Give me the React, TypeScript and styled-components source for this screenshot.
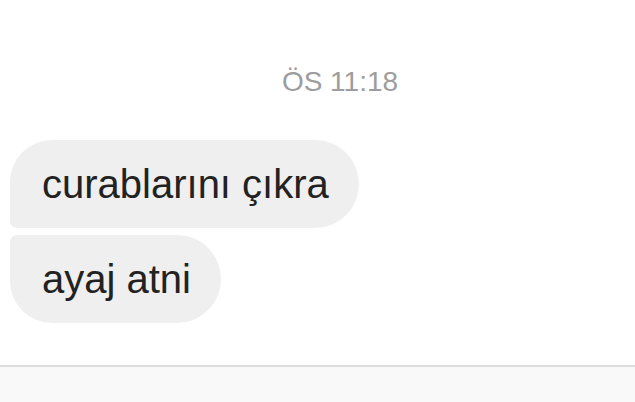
import React from "react";
import styled, { createGlobalStyle } from "styled-components";

const Global = createGlobalStyle`
  html, body { margin: 0; padding: 0; background: #ffffff; overflow: hidden; }
  #root { height: 100vh; }
`;

const Screen = styled.div`
  height: 100vh;
  display: flex;
  flex-direction: column;
  font-family: "Liberation Sans", Arial, sans-serif;
  background: #ffffff;
`;

const Thread = styled.div`
  display: flex;
  flex-direction: column;
  align-items: flex-start;
  padding: 67px 0 0 10px;
`;

const Timestamp = styled.div`
  align-self: stretch;
  text-align: center;
  padding-left: 35px;
  font-size: 28px;
  line-height: 30px;
  color: #9d9d9d;
  margin-bottom: 43px;
`;

const Bubbles = styled.div`
  display: flex;
  flex-direction: column;
  align-items: flex-start;
  gap: 7px;
`;

const Bubble = styled.div<{ $position: "first" | "last" }>`
  height: 88px;
  line-height: 88px;
  padding: 0 30px 0 32px;
  font-size: 40px;
  color: #222222;
  background: #efefef;
  white-space: nowrap;
  border-radius: ${(p) =>
    p.$position === "first" ? "42px 44px 44px 7px" : "7px 44px 44px 42px"};
`;

const Composer = styled.div`
  margin-top: auto;
  height: 35px;
  border-top: 2px solid #dddddd;
  background: #f9f9f9;
`;

export default function App() {
  return (
    <>
      <Global />
      <Screen>
        <Thread>
          <Timestamp>ÖS 11:18</Timestamp>
          <Bubbles>
            <Bubble $position="first">curablarını çıkra</Bubble>
            <Bubble $position="last">ayaj atni</Bubble>
          </Bubbles>
        </Thread>
        <Composer />
      </Screen>
    </>
  );
}
